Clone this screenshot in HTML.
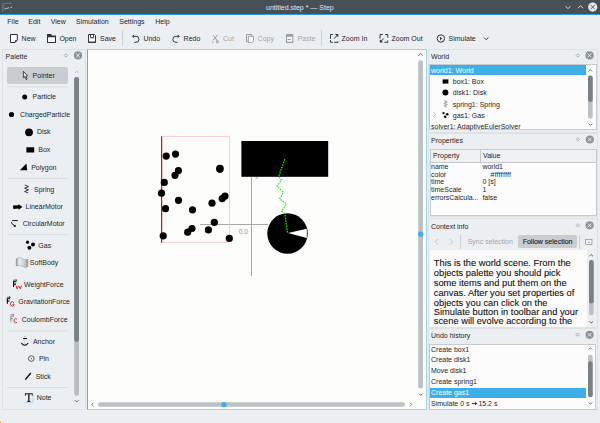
<!DOCTYPE html>
<html><head><meta charset="utf-8">
<style>
*{margin:0;padding:0;box-sizing:border-box}
html,body{width:600px;height:423px;overflow:hidden;background:#eceff2}
body{position:relative;font-family:"Liberation Sans",sans-serif;font-size:7px;color:#232629}
.a{position:absolute}
.t{position:absolute;white-space:nowrap;line-height:10px;height:10px}
svg{position:absolute;overflow:visible}
.dis{color:#a3a6a9}
</style></head><body>

<!-- title bar -->
<div class="a" style="left:0;top:0;width:600px;height:14px;background:#475057"></div>
<div class="a" style="left:0;top:14px;width:600px;height:1px;background:#2d9ad9"></div>
<div class="t" style="left:266px;top:2.5px;color:#e3e5e7">untitled.step * — Step</div>
<svg style="left:0;top:0" width="600" height="15">
  <g fill="none" stroke="#7d848a" stroke-width="0.7">
    <path d="M2.6 4 L2.6 11.8 M3 3.4 L11 3.4 L12.3 4.6 M4 5 L4 10.5"/>
  </g>
  <path d="M4.5 8.6 L8.3 8.3 L8.3 7" fill="none" stroke="#c9cdd1" stroke-width="0.8"/>
  <circle cx="11.2" cy="7.4" r="0.7" fill="#d6dade"/>
  <path d="M9.5 9.5 L11.5 10.5" stroke="#6e757b" stroke-width="0.6"/>
  <path d="M565.5 6.2 L568 8.7 L570.5 6.2" fill="none" stroke="#e8e9ea" stroke-width="0.9"/>
  <path d="M578 8.2 L580.5 5.7 L583 8.2" fill="none" stroke="#e8e9ea" stroke-width="0.9"/>
  <circle cx="592.7" cy="7.1" r="4.6" fill="#e8e9ea"/>
  <path d="M590.6 5 L594.8 9.2 M594.8 5 L590.6 9.2" stroke="#475057" stroke-width="0.9"/>
</svg>

<!-- menu -->
<div class="t" style="left:7.3px;top:16.5px">File</div>
<div class="t" style="left:28.3px;top:16.5px">Edit</div>
<div class="t" style="left:50.7px;top:16.5px">View</div>
<div class="t" style="left:76px;top:16.5px">Simulation</div>
<div class="t" style="left:119.3px;top:16.5px">Settings</div>
<div class="t" style="left:155.3px;top:16.5px">Help</div>

<!-- toolbar -->
<div class="t" style="left:21.6px;top:34.2px">New</div>
<div class="t" style="left:59.4px;top:34.2px">Open</div>
<div class="t" style="left:100px;top:34.2px">Save</div>
<div class="t" style="left:143.4px;top:34.2px">Undo</div>
<div class="t" style="left:183.6px;top:34.2px">Redo</div>
<div class="t dis" style="left:223px;top:34.2px">Cut</div>
<div class="t dis" style="left:257.6px;top:34.2px">Copy</div>
<div class="t dis" style="left:297.4px;top:34.2px">Paste</div>
<div class="t" style="left:341.6px;top:34.2px">Zoom In</div>
<div class="t" style="left:391.5px;top:34.2px">Zoom Out</div>
<div class="t" style="left:448.5px;top:34.2px">Simulate</div>
<svg style="left:0;top:0" width="600" height="50">
  <g fill="none" stroke="#31363b" stroke-width="1">
    <!-- new -->
    <path d="M10.5 34.5 L17.3 34.5 L17.3 40.3 L15 42.5 L10.5 42.5 Z" fill="#fcfcfc"/>
    <!-- save -->
    <path d="M88.5 34.5 L94.6 34.5 L95.5 35.5 L95.5 42.3 L88.5 42.3 Z" fill="#fcfcfc"/>
    <path d="M90.6 34.5 L90.6 37.8 L93.7 37.8 L93.7 34.5"/>
    <!-- undo -->
    <path d="M132.6 36.3 L136 36.3 A3 3 0 0 1 136 42.3 L134.3 42.3"/>
    <path d="M134 34.9 L132.6 36.3 L134 37.7"/>
    <!-- redo -->
    <path d="M179.2 36.3 L175.8 36.3 A3 3 0 0 0 175.8 42.3 L177.5 42.3"/>
    <path d="M177.8 34.9 L179.2 36.3 L177.8 37.7"/>
    <!-- zoom in -->
    <path d="M332.8 34.5 L330.5 34.5 L330.5 38.8 M330.5 40.2 L330.5 42.3 L332.8 42.3 M334.2 42.3 L338 42.3 L338 41.3"/>
    <path d="M334 38.7 L337.2 35.3"/>
    <!-- zoom out -->
    <path d="M380 38.5 L380 34.5 L382.8 34.5 M385.2 34.5 L387.8 34.5 L387.8 37.7 M384.3 42.3 L387.8 42.3 L387.8 40.5"/>
    <path d="M381.3 41 L383.8 38.5"/>
    <!-- simulate -->
    <circle cx="440.9" cy="38.5" r="3.7"/>
    <path d="M484 37.5 L486.2 39.7 L488.4 37.5"/>
  </g>
  <path d="M15 42.5 L15 40.3 L17.3 40.3 Z" fill="#31363b"/>
  <path d="M47 34 L51 34 L52.2 35.5 L56 35.5 L56 43 L47 43 Z" fill="#31363b"/>
  <rect x="48" y="37.3" width="7" height="4.7" fill="#fcfcfc"/>
  <rect x="88" y="41.7" width="8" height="1.1" fill="#31363b"/>
  <path d="M338.3 34 L338.3 37.3 L335 34 Z" fill="#31363b"/>
  <path d="M379.8 42.5 L379.8 39.2 L383.1 42.5 Z" fill="#31363b"/>
  <path d="M440 36.8 L442.3 38.5 L440 40.2 Z" fill="#31363b"/>
  <g fill="none" stroke="#9a9ea2" stroke-width="1">
    <!-- cut -->
    <path d="M213.3 35.3 L217.4 41 M217.6 35 L213 40.3"/>
    <circle cx="217.4" cy="41.8" r="1.1"/>
    <path d="M212 42.3 L213.5 42"/>
    <!-- copy -->
    <path d="M248.3 41.6 L246.5 41.6 L246.5 34.5 L251.9 34.5 L251.9 36.3"/>
    <path d="M248.3 36.3 L253.5 36.3 L253.5 40.8 L251.8 42.5 L248.3 42.5 Z" fill="#fcfcfc"/>
    <!-- paste -->
    <path d="M286.5 36 L292.8 36 L292.8 42.3 L286.5 42.3 Z" fill="#fcfcfc"/>
    <path d="M287.5 39.5 L290.8 39.5"/>
  </g>
  <rect x="286" y="34" width="7.3" height="2.4" rx="0.6" fill="#9a9ea2"/>
  <rect x="286" y="41.8" width="7.3" height="1" fill="#9a9ea2"/>
  <rect x="122.3" y="30" width="0.8" height="16" fill="#c8cbce"/>
  <rect x="321" y="30" width="0.8" height="16" fill="#c8cbce"/>
</svg>

<!-- ============ PALETTE DOCK ============ -->
<div class="a" style="left:2px;top:49px;width:84px;height:361px;border:1px solid #dfe2e5;border-radius:1px"></div>
<div class="t" style="left:5.6px;top:51.8px">Palette</div>
<svg style="left:0;top:0" width="90" height="423">
  <path d="M65.9 53.7 L67.6 55.4 L65.9 57.1 L64.2 55.4 Z" fill="none" stroke="#8e9397" stroke-width="0.7"/>
  <circle cx="78" cy="55.4" r="4.1" fill="#8e9397"/>
  <path d="M76.2 53.6 L79.8 57.2 M79.8 53.6 L76.2 57.2" stroke="#eff0f1" stroke-width="0.9"/>
  <!-- scrollbar -->
  <path d="M75 73 L76.8 71.2 L78.6 73" fill="none" stroke="#a9adb1" stroke-width="0.75"/>
  <rect x="74.2" y="76.9" width="4.8" height="319" rx="2.4" fill="#b9bdc1"/>
  <rect x="74.2" y="76.9" width="4.8" height="265" rx="2.4" fill="#7b8085"/>
  <path d="M75 400.2 L76.8 402 L78.6 400.2" fill="none" stroke="#3b4045" stroke-width="0.75"/>
  <!-- separators -->
  <g fill="#d4d7da">
    <rect x="7" y="86.5" width="61" height="0.8"/>
    <rect x="7" y="178.2" width="61" height="0.8"/>
    <rect x="7" y="234.3" width="61" height="0.8"/>
    <rect x="7" y="330.5" width="61" height="0.8"/>
    <rect x="7" y="387" width="61" height="0.8"/>
  </g>
</svg>
<div class="a" style="left:7px;top:67px;width:61px;height:16.5px;background:#c9cdd0;border-radius:2px"></div>
<div class="t" style="left:32.6px;top:71.1px">Pointer</div>
<div class="t" style="left:32.6px;top:92.4px">Particle</div>
<div class="t" style="left:19.9px;top:110px">ChargedParticle</div>
<div class="t" style="left:36.9px;top:127.3px">Disk</div>
<div class="t" style="left:38.3px;top:144.9px">Box</div>
<div class="t" style="left:31.2px;top:162.8px">Polygon</div>
<div class="t" style="left:34px;top:184.8px">Spring</div>
<div class="t" style="left:25.5px;top:202.2px">LinearMotor</div>
<div class="t" style="left:22.7px;top:219.3px">CircularMotor</div>
<div class="t" style="left:38.3px;top:241px">Gas</div>
<div class="t" style="left:29.8px;top:258.3px">SoftBody</div>
<div class="t" style="left:24.1px;top:279.5px">WeightForce</div>
<div class="t" style="left:18.2px;top:297.1px">GravitationForce</div>
<div class="t" style="left:21.7px;top:314.7px">CoulombForce</div>
<div class="t" style="left:32.9px;top:336.8px">Anchor</div>
<div class="t" style="left:38.9px;top:354.2px">Pin</div>
<div class="t" style="left:35.7px;top:371.9px">Stick</div>
<div class="t" style="left:36.7px;top:393px">Note</div>
<svg style="left:0;top:0" width="90" height="423">
  <!-- pointer cursor -->
  <path d="M23.4 71.4 L23.4 77.6 L24.9 76.6 L26.2 79.5 L27.1 79 L25.9 76.1 L27.5 75.8 Z" fill="#fcfcfc" stroke="#111" stroke-width="0.75"/>
  <circle cx="24.7" cy="97" r="2.5" fill="#000"/>
  <circle cx="11.5" cy="114.5" r="2.6" fill="#000"/>
  <circle cx="29" cy="132.3" r="3.9" fill="#000"/>
  <rect x="26.4" y="147.3" width="7.8" height="5.2" fill="#000"/>
  <path d="M19.9 170.2 L26.4 163.5 L27.2 170.2 Z" fill="#000"/>
  <!-- spring -->
  <path d="M24.8 185 L28.6 186.6 L24.6 188.2 L28.6 189.9 L24.6 191.5 L28.2 192.9" fill="none" stroke="#222" stroke-width="0.9"/>
  <!-- linear motor -->
  <path d="M13 205.6 L18.6 205.2 L18.4 204 L22.4 206.9 L18.6 209.8 L18.6 208.6 L13.4 209 Z" fill="#000"/>
  <!-- circular motor -->
  <path d="M17.8 220.6 L12.2 220.6 M11.4 222.2 L11.9 223.6 L14.8 226" fill="none" stroke="#111" stroke-width="1"/>
  <circle cx="14.9" cy="226" r="1.1" fill="#111"/>
  <!-- gas -->
  <circle cx="27.5" cy="242.2" r="1.6" fill="#000"/><circle cx="33" cy="244.5" r="2" fill="#000"/><circle cx="29.4" cy="247.8" r="2" fill="#000"/>
  <!-- softbody -->
  <defs><linearGradient id="sbg" x1="0" y1="0" x2="1" y2="0"><stop offset="0" stop-color="#8d9195"/><stop offset="0.25" stop-color="#eceeef"/><stop offset="0.7" stop-color="#cfd2d4"/><stop offset="1" stop-color="#8d9195"/></linearGradient></defs>
  <path d="M16.2 259 Q19 256.2 21.5 258.5 Q24 260 27.8 259.3 L27.8 266.5 Q25 268.5 22.5 266.2 Q19 264.8 16.2 266 Z" fill="url(#sbg)" stroke="#8d9195" stroke-width="0.5"/>
  <!-- weight force -->
  <path d="M13.6 287 L13.6 281.8 L16.4 281.8 M13.6 284.1 L15.9 284.1" fill="none" stroke="#000" stroke-width="1.1"/>
  <path d="M13 280.2 L16.6 280.2 M15.6 279.3 L16.8 280.2 L15.6 281.1" stroke="#000" stroke-width="0.6" fill="none"/>
  <path d="M16 285.5 L17 288.8 L18.7 286 L20.4 288.8 L21.5 285.5" fill="none" stroke="#cc1010" stroke-width="0.9"/>
  <!-- gravitation -->
  <path d="M7.3 303.7 L7.3 298.8 L9.9 298.8 M7.3 301 L9.5 301" fill="none" stroke="#000" stroke-width="1.1"/>
  <path d="M6.8 297.3 L10.2 297.3 M9.2 296.4 L10.4 297.3 L9.2 298.2" stroke="#000" stroke-width="0.6" fill="none"/>
  <path d="M13.9 302.6 A2 2.2 0 1 0 14 305.2 L14 304.2 L12.6 304.2" fill="none" stroke="#cc1010" stroke-width="0.9"/>
  <!-- coulomb -->
  <path d="M10.8 321.8 L10.8 316.3 L13.6 316.3 M10.8 318.7 L13.1 318.7" fill="none" stroke="#8a8a8a" stroke-width="1"/>
  <path d="M10.3 314.8 L13.8 314.8 M12.8 313.9 L14 314.8 L12.8 315.7" stroke="#555" stroke-width="0.6" fill="none"/>
  <path d="M16.9 319.2 A1.7 2.1 0 1 0 16.9 322.3" fill="none" stroke="#cc1010" stroke-width="0.9"/>
  <!-- anchor -->
  <path d="M24.8 338.5 L24.8 345" stroke="#b5b8bb" stroke-width="0.6"/>
  <circle cx="24.8" cy="336.4" r="0.6" fill="#9a9ea2"/>
  <path d="M23.1 338.5 L27.1 338.5" stroke="#000" stroke-width="1"/>
  <path d="M21.4 343 Q24.8 347.6 28.2 343" fill="none" stroke="#000" stroke-width="1.1"/>
  <!-- pin -->
  <circle cx="31.3" cy="358.6" r="2.8" fill="none" stroke="#31363b" stroke-width="0.8"/>
  <circle cx="31.3" cy="358.6" r="0.6" fill="#31363b"/>
  <!-- stick -->
  <path d="M25.3 379.6 L30.8 373" stroke="#000" stroke-width="1.3"/>
  <!-- note -->
  <path d="M25.4 393.8 L32.3 393.8 M25.4 393.3 L25.4 395.6 M32.3 393.3 L32.3 395.6 M27.2 401.4 L30.5 401.4" fill="none" stroke="#000" stroke-width="0.9"/>
  <path d="M28.85 393.8 L28.85 401.4" stroke="#000" stroke-width="1.2"/>
  <path d="M33 393 L33 402.5 L24.5 402.5" fill="none" stroke="#9cc2e6" stroke-width="0.6"/>
</svg>

<!-- ============ CANVAS ============ -->
<div class="a" style="left:87px;top:49px;width:340px;height:361px;background:#fdfdfc;border:1px solid #9fd4f1;border-left:1.2px solid #4db4ea"></div>
<svg style="left:0;top:0" width="600" height="423">
  <!-- scrollbars -->
  <path d="M418.4 55.8 L420.6 53.4 L422.8 55.8" fill="none" stroke="#3b4045" stroke-width="0.8"/>
  <rect x="418.2" y="60.3" width="4.8" height="328.3" rx="2.4" fill="#bdc1c4"/>
  <path d="M419 393.6 L420.8 395.4 L422.6 393.6" fill="none" stroke="#3b4045" stroke-width="0.75"/>
  <circle cx="420.7" cy="234.2" r="2.7" fill="#3daee9"/>
  <path d="M93.5 402.7 L91.7 404.5 L93.5 406.3" fill="none" stroke="#3b4045" stroke-width="0.75"/>
  <rect x="98" y="402.2" width="307" height="4.6" rx="2.3" fill="#bdc1c4"/>
  <path d="M410 402.7 L411.8 404.5 L410 406.3" fill="none" stroke="#3b4045" stroke-width="0.75"/>
  <circle cx="224" cy="404.6" r="2.7" fill="#3daee9"/>

  <!-- axes -->
  <rect x="251" y="177" width="0.9" height="99" fill="#a0a0a0"/>
  <rect x="200" y="224" width="68" height="0.9" fill="#a0a0a0"/>
  <text x="238.7" y="233.9" font-family="Liberation Sans" font-size="6.6" fill="#8494ab">0.0</text>
  <path d="M255.3 178.3 L258.2 178.3 M256.75 176.9 L256.75 178.3" stroke="#7f9abd" stroke-width="0.6" fill="none"/>

  <!-- gas box -->
  <rect x="161.8" y="136.6" width="67.6" height="105.7" fill="none" stroke="#ffc0c0" stroke-width="0.75"/>
  <rect x="161" y="136.4" width="1.2" height="106.2" fill="#ff0000"/>

  <!-- gas particles -->
  <g fill="#000">
    <circle cx="166.2" cy="156.1" r="3.6"/>
    <circle cx="175.5" cy="154.1" r="3.6"/>
    <circle cx="178.4" cy="170.6" r="3.6"/>
    <circle cx="175" cy="175.3" r="3.6"/>
    <ellipse cx="219.9" cy="168.8" rx="3.9" ry="4.1"/>
    <circle cx="164.3" cy="182.4" r="3.6"/>
    <circle cx="161.5" cy="193.2" r="3.6"/>
    <circle cx="178.5" cy="200.3" r="3.6"/>
    <circle cx="165.5" cy="208.7" r="3.6"/>
    <circle cx="192.5" cy="209.8" r="3.6"/>
    <circle cx="212" cy="203.2" r="3.6"/>
    <circle cx="222.2" cy="198.6" r="3.6"/>
    <circle cx="225" cy="196.1" r="3.6"/>
    <circle cx="214.3" cy="222.3" r="3.6"/>
    <circle cx="208.4" cy="229.9" r="3.6"/>
    <circle cx="187.7" cy="232.2" r="3.6"/>
    <circle cx="192" cy="228.5" r="3.6"/>
    <circle cx="163.2" cy="235.8" r="3.6"/>
    <circle cx="229.3" cy="238.4" r="3.6"/>
  </g>

  <!-- box -->
  <rect x="241.4" y="141" width="86.8" height="35.8" fill="#000"/>

  <!-- disk -->
  <circle cx="287.5" cy="233.5" r="20.2" fill="#000"/>
  <path d="M288 233 L306.8 228.8 L306.8 238.1 Z" fill="#fcfcfc"/>

  <!-- spring -->
  <path d="M284.9 159.1 L278.6 176.5 L281.6 179.8 L276.9 186.1 L283.5 192.2 L279.6 198.8 L286.5 203.8 L281.6 211.3 L284.9 213.7 L285.7 219.5 L287.5 233" fill="none" stroke="#00ff00" stroke-width="1.2" stroke-dasharray="1.6 1.1"/>
</svg>

<!-- ============ RIGHT DOCKS ============ -->
<!-- World -->
<div class="a" style="left:428px;top:49px;width:170px;height:84px;border:1px solid #dfe2e5"></div>
<div class="t" style="left:431px;top:51.6px">World</div>
<div class="a" style="left:429px;top:64px;width:168px;height:66px;background:#fcfcfc;border:1px solid #c8cbce"></div>
<div class="a" style="left:430px;top:65.2px;width:155.6px;height:10.3px;background:#3daee9"></div>
<div class="t" style="left:431px;top:66px;color:#fcfcfc">world1: World</div>
<div class="t" style="left:452.8px;top:76.9px">box1: Box</div>
<div class="t" style="left:452.8px;top:88px">disk1: Disk</div>
<div class="t" style="left:452.8px;top:99.7px">spring1: Spring</div>
<div class="t" style="left:452.8px;top:111.2px">gas1: Gas</div>
<div class="t" style="left:431px;top:121.6px">solver1: AdaptiveEulerSolver</div>
<svg style="left:0;top:0" width="600" height="423">
  <path d="M577.8 53.7 L579.5 55.4 L577.8 57.1 L576.1 55.4 Z" fill="none" stroke="#8e9397" stroke-width="0.7"/>
  <circle cx="589.6" cy="55.4" r="4.1" fill="#8e9397"/>
  <path d="M587.8 53.6 L591.4 57.2 M591.4 53.6 L587.8 57.2" stroke="#eff0f1" stroke-width="0.9"/>
  <rect x="442.6" y="79.4" width="5.8" height="4.2" fill="#000"/>
  <circle cx="445.4" cy="92.6" r="3" fill="#000"/>
  <path d="M444.4 100.6 L446.9 101.9 L444.4 103.2 L446.9 104.5 L444.4 105.8 L446.9 107.1" fill="none" stroke="#a3a6a9" stroke-width="1.1"/>
  <path d="M433.4 112.3 L435.6 114.6 L433.4 116.9" fill="none" stroke="#a3a6a9" stroke-width="0.9"/>
  <circle cx="443.5" cy="113.2" r="1.1" fill="#000"/><circle cx="447.2" cy="114.2" r="1.3" fill="#000"/><circle cx="445.1" cy="116.7" r="1.3" fill="#000"/>
  <path d="M588.6 71.5 L590.4 69.7 L592.2 71.5" fill="none" stroke="#3b4045" stroke-width="0.75"/>
  <rect x="588" y="75.5" width="4.7" height="43.2" rx="2.3" fill="#bdc1c4"/>
  <rect x="588" y="75.5" width="4.7" height="26.5" rx="2.3" fill="#7b8085"/>
  <path d="M588.6 123.6 L590.4 125.4 L592.2 123.6" fill="none" stroke="#3b4045" stroke-width="0.75"/>
</svg>

<!-- Properties -->
<div class="a" style="left:428px;top:133px;width:170px;height:84px;border:1px solid #dfe2e5"></div>
<div class="t" style="left:431px;top:136px">Properties</div>
<svg style="left:0;top:0" width="600" height="423">
  <path d="M577.8 137.8 L579.5 139.5 L577.8 141.2 L576.1 139.5 Z" fill="none" stroke="#8e9397" stroke-width="0.7"/>
  <circle cx="589.8" cy="139.5" r="4.1" fill="#8e9397"/>
  <path d="M588 137.7 L591.6 141.3 M591.6 137.7 L588 141.3" stroke="#eff0f1" stroke-width="0.9"/>
</svg>
<div class="a" style="left:429.5px;top:148.5px;width:167px;height:67px;background:#fcfcfc;border:1px solid #c8cbce"></div>
<div class="a" style="left:430.5px;top:149.5px;width:165px;height:13px;background:#eff0f1;border-bottom:1px solid #c8cbce"></div>
<div class="a" style="left:480px;top:149.5px;width:1px;height:13px;background:#c8cbce"></div>
<div class="t" style="left:433px;top:150.9px">Property</div>
<div class="t" style="left:483px;top:150.9px">Value</div>
<div class="t" style="left:431px;top:161.5px;line-height:10px">name</div>
<div class="t" style="left:431px;top:170.3px">color</div>
<div class="t" style="left:431px;top:177px">time</div>
<div class="t" style="left:431px;top:185.3px">timeScale</div>
<div class="t" style="left:431px;top:193.2px">errorsCalcula...</div>
<div class="t" style="left:482.4px;top:161.5px">world1</div>
<div class="t" style="left:490.5px;top:170.3px"><span style="letter-spacing:0.25px">#ffffffff</span></div>
<div class="t" style="left:482.4px;top:177px">0 [s]</div>
<div class="t" style="left:482.4px;top:185.3px">1</div>
<div class="t" style="left:482.4px;top:193.2px">false</div>

<!-- Context info -->
<div class="a" style="left:428px;top:218px;width:170px;height:110px;border:1px solid #dfe2e5"></div>
<div class="t" style="left:431px;top:221.9px">Context info</div>
<div class="t dis" style="left:467.7px;top:236.7px">Sync selection</div>
<div class="a" style="left:518px;top:235.3px;width:59px;height:12.5px;background:#c9cdd0;border-radius:2px"></div>
<div class="t" style="left:522.7px;top:236.7px;-webkit-text-stroke:0.15px #232629">Follow selection</div>
<div class="a" style="left:429.5px;top:250px;width:157.5px;height:77px;background:#fcfcfc"></div>
<div class="a" style="left:433.8px;top:258.3px;font-size:9.3px;line-height:10px;color:#101112;white-space:nowrap;-webkit-text-stroke:0.1px #101112">This is the world scene. From the</div>
<div class="a" style="left:433.8px;top:268.3px;font-size:9.3px;line-height:10px;color:#101112;white-space:nowrap;-webkit-text-stroke:0.1px #101112">objects palette you should pick</div>
<div class="a" style="left:433.8px;top:277.8px;font-size:9.3px;line-height:10px;color:#101112;white-space:nowrap;-webkit-text-stroke:0.1px #101112">some items and put them on the</div>
<div class="a" style="left:433.8px;top:287.8px;font-size:9.3px;line-height:10px;color:#101112;white-space:nowrap;-webkit-text-stroke:0.1px #101112">canvas. After you set properties of</div>
<div class="a" style="left:433.8px;top:297.5px;font-size:9.3px;line-height:10px;color:#101112;white-space:nowrap;-webkit-text-stroke:0.1px #101112">objects you can click on the</div>
<div class="a" style="left:433.8px;top:307.0px;font-size:9.3px;line-height:10px;color:#101112;white-space:nowrap;-webkit-text-stroke:0.1px #101112">Simulate button in toolbar and your</div>
<div class="a" style="left:433.8px;top:316.4px;font-size:9.3px;line-height:10px;color:#101112;white-space:nowrap;-webkit-text-stroke:0.1px #101112">scene will evolve according to the</div>
<svg style="left:0;top:0" width="600" height="423">
  <path d="M577.8 223.6 L579.5 225.3 L577.8 227 L576.1 225.3 Z" fill="none" stroke="#8e9397" stroke-width="0.7"/>
  <circle cx="589.6" cy="225.3" r="4.1" fill="#8e9397"/>
  <path d="M587.8 223.5 L591.4 227.1 M591.4 223.5 L587.8 227.1" stroke="#eff0f1" stroke-width="0.9"/>
  <path d="M438 239 L435.2 241.8 L438 244.6" fill="none" stroke="#b5b9bd" stroke-width="0.8"/>
  <path d="M449.8 239 L452.6 241.8 L449.8 244.6" fill="none" stroke="#b5b9bd" stroke-width="0.8"/>
  <rect x="460.3" y="235" width="0.8" height="14" fill="#c8cbce"/>
  <rect x="579" y="235" width="0.8" height="14" fill="#c8cbce"/>
  <rect x="585.7" y="239.5" width="6.3" height="5.1" fill="none" stroke="#7b8085" stroke-width="0.6"/>
  <path d="M587.8 242 L588.8 243 L589.8 242" fill="none" stroke="#7b8085" stroke-width="0.5"/>
  <path d="M589.4 256.3 L591.2 254.5 L593 256.3" fill="none" stroke="#3b4045" stroke-width="0.75"/>
  <rect x="589" y="260" width="4.7" height="55.2" rx="2.3" fill="#bdc1c4"/>
  <rect x="589" y="260" width="4.7" height="43.5" rx="2.3" fill="#7b8085"/>
  <path d="M589.4 321.3 L591.2 323.1 L593 321.3" fill="none" stroke="#3b4045" stroke-width="0.75"/>
</svg>

<!-- Undo history -->
<div class="a" style="left:428px;top:328px;width:170px;height:82px;border:1px solid #dfe2e5"></div>
<div class="t" style="left:431px;top:330.9px">Undo history</div>
<div class="a" style="left:429.4px;top:343.5px;width:167px;height:66px;background:#fcfcfc;border:1px solid #c8cbce"></div>
<div class="a" style="left:430.4px;top:388.3px;width:155.8px;height:9.3px;background:#3daee9"></div>
<div class="t" style="left:431px;top:345px">Create box1</div>
<div class="t" style="left:431px;top:355.3px">Create disk1</div>
<div class="t" style="left:431px;top:365.7px">Move disk1</div>
<div class="t" style="left:431px;top:376.5px">Create spring1</div>
<div class="t" style="left:431px;top:388.1px;color:#fcfcfc">Create gas1</div>
<div class="t" style="left:431px;top:399.4px">Simulate 0 s</div>
<div class="t" style="left:478.4px;top:399.4px">15.2 s</div>
<svg style="left:0;top:0" width="600" height="423"><path d="M471.8 403.6 L476.2 403.6" stroke="#232629" stroke-width="0.9"/><path d="M475 401.9 L477.4 403.6 L475 405.3 Z" fill="#232629"/></svg>
<svg style="left:0;top:0" width="600" height="423">
  <path d="M577.6 332.9 L579.3 334.6 L577.6 336.3 L575.9 334.6 Z" fill="none" stroke="#8e9397" stroke-width="0.7"/>
  <circle cx="589.6" cy="334.8" r="4.1" fill="#8e9397"/>
  <path d="M587.8 333 L591.4 336.6 M591.4 333 L587.8 336.6" stroke="#eff0f1" stroke-width="0.9"/>
  <path d="M588.6 349.5 L590.4 347.7 L592.2 349.5" fill="none" stroke="#3b4045" stroke-width="0.75"/>
  <rect x="588" y="354.8" width="4.7" height="42.5" rx="2.3" fill="#bdc1c4"/>
  <rect x="588" y="361.2" width="4.7" height="36.1" rx="2.3" fill="#7b8085"/>
  <path d="M588.6 402.5 L590.4 404.3 L592.2 402.5" fill="none" stroke="#3b4045" stroke-width="0.75"/>
</svg>

<div class="a" style="left:0;top:421.5px;width:1px;height:1.5px;background:#e07b2a"></div>
</body></html>
